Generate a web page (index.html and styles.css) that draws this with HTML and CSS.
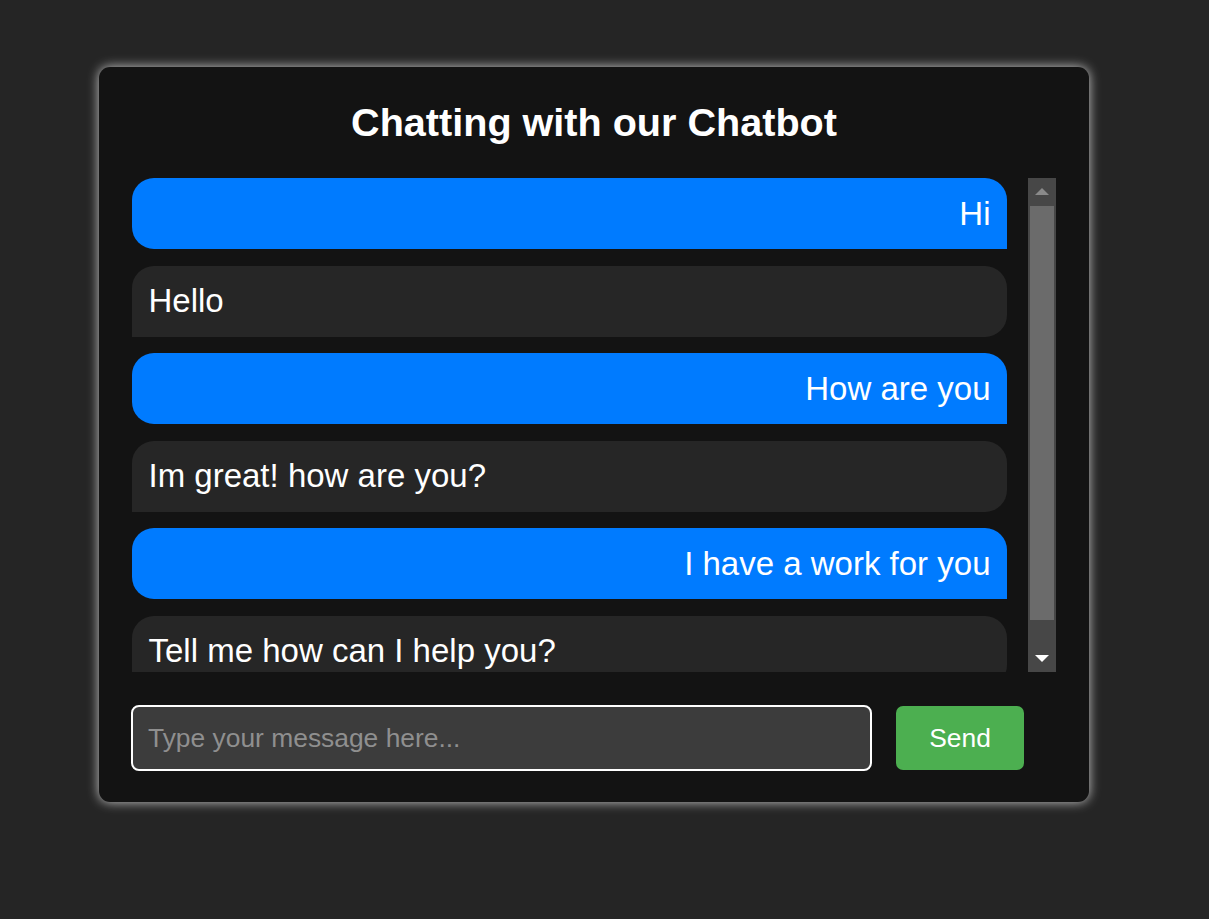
FILE: index.html
```html
<!DOCTYPE html>
<html lang="en">
<head>
<meta charset="utf-8">
<title>Chatbot</title>
<link rel="stylesheet" href="styles.css">
</head>
<body>
  <div class="card">
    <h2 class="title">Chatting with our Chatbot</h2>
    <div class="chat-area">
      <div class="messages">
        <div class="msg user">Hi</div>
        <div class="msg bot">Hello</div>
        <div class="msg user">How are you</div>
        <div class="msg bot">Im great! how are you?</div>
        <div class="msg user">I have a work for you</div>
        <div class="msg bot">Tell me how can I help you?</div>
      </div>
      <div class="scrollbar">
        <div class="sb-btn">
          <svg width="14" height="7" viewBox="0 0 14 7"><polygon points="0,7 7,0 14,7" fill="#8a8a8a"/></svg>
        </div>
        <div class="sb-track"><div class="sb-thumb"></div></div>
        <div class="sb-btn">
          <svg width="14" height="7" viewBox="0 0 14 7"><polygon points="0,0 14,0 7,7" fill="#ffffff"/></svg>
        </div>
      </div>
    </div>
    <div class="input-row">
      <input class="text-input" type="text" placeholder="Type your message here...">
      <button class="send-btn">Send</button>
    </div>
  </div>
</body>
</html>
```

FILE: styles.css
```css
html, body {
  margin: 0;
  height: 100%;
}
body {
  background: #252525;
  font-family: "Liberation Sans", Arial, sans-serif;
  padding: 67px 0 0 99px;
  box-sizing: border-box;
}
.card {
  width: 990px;
  box-sizing: border-box;
  background: #131313;
  border-radius: 11px;
  padding: 33px 33px 31px 33px;
  box-shadow: 0 0 12px rgba(255, 255, 255, 0.75);
}
.title {
  margin: 0 0 33px 0;
  color: #ffffff;
  font-size: 39.6px;
  font-weight: bold;
  text-align: center;
}
.chat-area {
  display: flex;
  height: 494px;
}
.messages {
  flex: 1;
  overflow: hidden;
}
.scrollbar {
  width: 28px;
  margin-left: 21px;
  background: #474747;
  display: flex;
  flex-direction: column;
}
.sb-btn {
  height: 27px;
  display: flex;
  align-items: center;
  justify-content: center;
  flex-shrink: 0;
}
.sb-track {
  flex: 1;
  padding: 1px 2px 0 2px;
}
.sb-thumb {
  height: 414px;
  background: #6b6b6b;
}
.msg {
  padding: 16.5px;
  margin-bottom: 16.5px;
  font-size: 33px;
  color: #ffffff;
}
.msg.user {
  background: #007bff;
  text-align: right;
  border-radius: 22px 22px 0 22px;
}
.msg.bot {
  background: #262626;
  text-align: left;
  border-radius: 22px 22px 22px 0;
}
.input-row {
  display: flex;
  align-items: center;
  margin-top: 33px;
  margin-left: -1px;
}
.text-input {
  width: 741px;
  height: 66px;
  box-sizing: border-box;
  background: #3c3c3c;
  border: 2px solid #ffffff;
  border-radius: 8px;
  padding: 0 15px;
  font-family: "Liberation Sans", Arial, sans-serif;
  font-size: 26.4px;
  color: #ffffff;
  outline: none;
}
.text-input::placeholder {
  color: #8f8f8f;
}
.send-btn {
  margin-left: 24px;
  width: 128px;
  height: 64px;
  background: #4caf50;
  border: none;
  border-radius: 7px;
  color: #ffffff;
  font-family: "Liberation Sans", Arial, sans-serif;
  font-size: 26.4px;
  cursor: pointer;
}
```
